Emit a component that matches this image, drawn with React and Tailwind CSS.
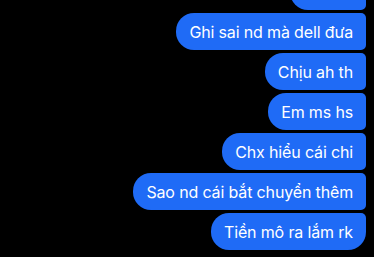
import React from "react";

const msgs = [
  "Ghi sai nd mà dell đưa",
  "Chịu ah th",
  "Em ms hs",
  "Chx hiểu cái chi",
  "Sao nd cái bắt chuyển thêm",
];

export default function App() {
  return (
    <div
      className="w-[374px] h-[257px] bg-black overflow-hidden"
      style={{ fontFamily: "Inter, 'Noto Sans', sans-serif" }}
    >
      <div className="flex flex-col items-end gap-[3px] pr-[8px] mt-[-27px]">
        <div className="h-[37px] w-[76px] bg-[#1f6bf6] rounded-l-[18px] rounded-r-[5px]" />
        {msgs.map((m) => (
          <div
            key={m}
            className="h-[37px] flex items-center px-[13px] bg-[#1f6bf6] text-white text-[16px] tracking-[-0.15px] leading-[22px] rounded-l-[18px] rounded-r-[5px] whitespace-nowrap"
          >
            {m}
          </div>
        ))}
        <div className="h-[37px] flex items-center px-[13px] bg-[#1f6bf6] text-white text-[16px] tracking-[-0.15px] leading-[22px] rounded-l-[18px] rounded-tr-[5px] rounded-br-[18px] whitespace-nowrap">
          Tiền mô ra lắm rk
        </div>
      </div>
    </div>
  );
}
